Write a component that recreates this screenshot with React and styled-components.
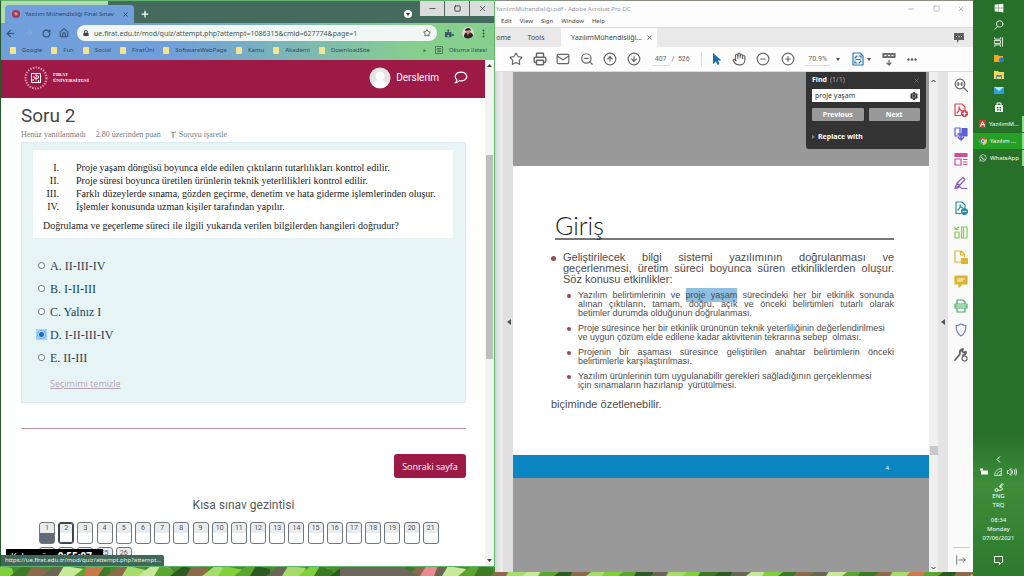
import React from "react";
import styled, { createGlobalStyle, css } from "styled-components";
import {
  ArrowLeft, ArrowRight, RotateCw, House, Star, Printer, Mail, ZoomOut,
  CircleArrowUp, CircleArrowDown, Hand, CircleMinus, CirclePlus,
  Minus, Square, X, Plus, Settings,
} from "lucide-react";
import { FaWindows, FaWhatsapp, FaPuzzlePiece, FaLock } from "react-icons/fa";

const ui = `"Noto Sans", "Open Sans", sans-serif`;
const maroon = "#9d1a47";

const Global = createGlobalStyle`
  *, *::before, *::after { box-sizing: border-box; }
  body { margin: 0; overflow: hidden; background: #267029; font-family: ${ui}; }
  button, input { font: inherit; color: inherit; }
  button { border: 0; padding: 0; background: none; display: flex; align-items: center; justify-content: center; }
  svg { display: block; flex: none; }
  h1, h2, p, ol, ul { margin: 0; padding: 0; font-weight: 400; list-style: none; }
`;

const Desktop = styled.div`
  position: relative;
  height: 100vh;
  display: grid;
  grid-template-columns: minmax(0, 495fr) minmax(0, 478fr) 51px;
  grid-template-rows: minmax(0, 1fr);
`;
const Wallpaper = styled.svg`
  position: absolute;
  left: 0;
  bottom: 0;
  width: 100%;
  height: 12px;
`;

/* ---------- browser ---------- */

const Browser = styled.section`
  position: relative;
  display: flex;
  flex-direction: column;
  margin-bottom: 9px;
  border: 1px solid #5fb56c;
  border-left-color: #24592b;
  overflow: hidden;
  background: #fff;
  z-index: 1;
`;
const TabStrip = styled.div`
  display: flex;
  height: 22px;
  padding-left: 4px;
  background: linear-gradient(#aedcae, #aedcae) 0 0 / 107px 100% no-repeat, #446b5e;
`;
const BrowserTab = styled.div`
  display: flex;
  align-items: center;
  align-self: flex-end;
  width: 129px;
  height: 18px;
  padding: 0 5px 0 7px;
  gap: 5px;
  border-radius: 4px 4px 0 0;
  background: #719fdc;
  color: #28416b;
  font-size: 6px;
`;
const TabTitle = styled.span`
  flex: 1;
  white-space: nowrap;
`;
const TabRest = styled.div`
  flex: 1;
  display: flex;
  justify-content: flex-end;
  align-items: flex-start;
  background: #446b5e;
  color: #fff;
`;
const NewTab = styled.button`
  margin: 8px auto 0 6px;
`;
const TabSearch = styled.button`
  width: 8px;
  height: 8px;
  margin: 9px 8px 0 0;
  border-radius: 50%;
  background: #fff;
`;
const WindowButtons = styled.div`
  display: flex;
  gap: 1px;
`;
const WindowButton = styled.button`
  width: 24px;
  height: 15px;
  background: ${(p) => (p.$plain ? "none" : "#d9dedd")};
  color: ${(p) => (p.$plain ? "#999" : "#333")};
`;
const AddressBar = styled.div`
  display: flex;
  align-items: center;
  height: 20px;
  padding: 0 9px 0 4px;
  gap: 8px;
  background: linear-gradient(90deg, #719fdc 0, #719fdc 35%, #87cf8c 85%);
  color: #35516b;
`;
const Omnibox = styled.div`
  flex: 1;
  display: flex;
  align-items: center;
  height: 16px;
  padding: 0 6px 0 6px;
  gap: 5px;
  border-radius: 8px;
  background: #f1f7f4;
  color: #444;
`;
const UrlInput = styled.input`
  flex: 1;
  min-width: 0;
  border: 0;
  padding: 0;
  outline: 0;
  background: none;
  color: #4a5652;
  font-size: 7px;
`;
const Bookmarks = styled.nav`
  display: flex;
  align-items: center;
  height: 17px;
  padding: 0 7px 3px 9px;
  gap: 9px;
  background: linear-gradient(90deg, #719fdc 0, #719fdc 35%, #87cf8c 85%);
  font-size: 6px;
`;
const Bookmark = styled.a`
  display: flex;
  align-items: center;
  gap: 6px;
  color: #2f4a5c;
  text-decoration: none;
  white-space: nowrap;
`;
const FolderDot = styled.span`
  width: 6px;
  height: 7px;
  border-radius: 1px;
  background: #f6e58f;
`;
const Spacer = styled.span`
  flex: 1;
`;

const Viewport = styled.div`
  flex: 1;
  min-height: 0;
  display: flex;
`;
const Page = styled.main`
  flex: 1;
  min-width: 0;
  overflow: hidden;
  background: #fff;
`;
const PageScroll = styled.div`
  width: 9px;
  display: flex;
  flex-direction: column;
  align-items: center;
  padding: 4px 0;
  background: #f0f3f0;
`;
const Thumb = styled.div`
  width: 7px;
  height: 204px;
  margin: 88px 0 auto;
  background: #bdbfbd;
`;
const SiteHeader = styled.header`
  display: flex;
  align-items: center;
  height: 38px;
  padding: 0 17px 3px 23px;
  gap: 5px;
  background: ${maroon};
  color: #fff;
`;
const SiteName = styled.div`
  margin-right: auto;
  font: bold 5px/6px "Liberation Serif", serif;
`;
const CoursesLink = styled.a`
  display: flex;
  align-items: center;
  gap: 5px;
  margin-right: 10px;
  color: #fff;
  font: 10px Roboto, sans-serif;
  text-decoration: none;
`;
const Content = styled.div`
  padding: 7px 19px 0 20px;
`;
const Title = styled.h1`
  font: 19px/22px Roboto, sans-serif;
  color: #44474b;
`;
const Meta = styled.div`
  display: flex;
  gap: 10px;
  height: 15px;
  font: 8px/16px "Liberation Serif", serif;
  color: #777c80;
`;
const FlagButton = styled.button`
  gap: 3px;
`;
const Formulation = styled.form`
  height: 261px;
  padding: 7px 12px 8px 11px;
  border: 1px solid #dbebee;
  background: #e7f4f6;
`;
const QuestionBox = styled.div`
  height: 88px;
  padding: 11px 6px 0 10px;
  background: #fff;
  color: #222;
  font: 10px/12px "Liberation Serif", serif;
  white-space: nowrap;
`;
const Clauses = styled.ol`
  margin-bottom: 7px;
`;
const Clause = styled.li`
  display: flex;
  gap: 17px;
  line-height: 13px;
`;
const Numeral = styled.span`
  width: 16px;
  text-align: right;
`;
const Options = styled.div`
  padding: 17px 0 0 3px;
`;
const Option = styled.label`
  display: flex;
  align-items: center;
  gap: 3px;
  height: 23px;
  font: 12px "Liberation Serif", serif;
  color: #1f4350;
`;
const Radio = styled.input`
  appearance: none;
  width: 11px;
  height: 11px;
  margin: 0 0 2px;
  background: radial-gradient(circle, #fff 0 2px, #7d898d 3px 3px, transparent 4px);
  &:checked { background: radial-gradient(circle, #1767d2 0 2px, #b8dcfc 3px, #78b4f0 4px, #a4d0fb 5px); }
`;
const ClearLink = styled.a`
  display: block;
  margin: 7px 0 0 14px;
  color: #b7a5b6;
  font: 9px/13px "Open Sans", sans-serif;
`;
const Rule = styled.hr`
  margin: 25px 0;
  border: 0;
  border-top: 1px solid #b595a1;
`;
const NextButton = styled.button`
  width: 72px;
  height: 24px;
  margin-left: auto;
  border-radius: 3px;
  background: ${maroon};
  color: #fff;
  font: 9px "Open Sans", sans-serif;
`;
const NavTitle = styled.h2`
  margin: 18px 0 8px;
  text-align: center;
  font: 12px/18px Roboto, sans-serif;
  color: #55595c;
`;
const NavGrid = styled.nav`
  display: grid;
  grid-template-columns: repeat(21, 16px);
  justify-content: space-between;
  row-gap: 3px;
  padding: 0 27px 0 18px;
`;
const NavBox = styled.a`
  height: 22px;
  border: 1px solid #6f777d;
  border-radius: 3px;
  background: linear-gradient(#e9ecef 10px, ${(p) => (p.$answered ? "#626b75" : "#fff")} 10px);
  color: #555;
  font: 7px/10px Roboto, sans-serif;
  text-align: center;
  text-decoration: none;
  ${(p) => p.$current && css`box-shadow: inset 0 0 0 1px #40464d; border-color: #40464d;`}
`;
const Timer = styled.div`
  position: absolute;
  left: 5px;
  bottom: 0;
  width: 97px;
  height: 17px;
  padding-left: 5px;
  background: #000;
  color: #fff;
  font: 9px/14px ${ui};
  b { font-size: 10px; }
`;
const StatusBubble = styled.div`
  position: absolute;
  left: 0;
  bottom: 0;
  width: 163px;
  height: 11px;
  padding-left: 4px;
  border-radius: 0 2px 0 0;
  background: #3f6858;
  color: #e8f2ec;
  font: 6px/10px ${ui};
  white-space: nowrap;
`;

/* ---------- document viewer ---------- */

const Viewer = styled.section`
  position: relative;
  display: flex;
  flex-direction: column;
  margin-bottom: 4px;
  border-top: 1px solid #8a8f84;
  overflow: hidden;
  background: #fdfdfd;
  color: #444;
  font-size: 6px;
`;
const ViewerTitle = styled.div`
  display: flex;
  justify-content: space-between;
  align-items: center;
  height: 15px;
  padding-left: 1px;
  color: #999;
  white-space: nowrap;
`;
const Menus = styled.div`
  display: flex;
  gap: 8px;
  height: 11px;
  padding-left: 6px;
  line-height: 11px;
`;
const DocTabs = styled.div`
  display: flex;
  align-items: center;
  height: 20px;
  padding-right: 8px;
  background: #e9e9e9;
  border-top: 1px solid #ddd;
  font-size: 7px;
`;
const HomeTab = styled.button`
  width: 16px;
  justify-content: flex-end;
`;
const ToolsTab = styled.button`
  width: 50px;
`;
const DocTab = styled.div`
  display: flex;
  align-items: center;
  justify-content: flex-end;
  width: 96px;
  height: 20px;
  margin-right: auto;
  padding-right: 4px;
  gap: 4px;
  background: #fdfdfd;
`;
const Toolbar = styled.div`
  display: flex;
  align-items: center;
  height: 25px;
  padding: 0 56px 0 14px;
  justify-content: space-between;
  border-bottom: 1px solid #ddd;
  color: #666;
  font: 7px Roboto, sans-serif;
`;
const ToolGroup = styled.div`
  display: flex;
  align-items: center;
  justify-content: space-between;
  width: ${(p) => p.$width}px;
  white-space: nowrap;
`;
const Field = styled.span`
  padding: 2px 3px;
  border-bottom: 1px solid #ddd;
`;
const Caret = styled.span`
  border: 2px solid transparent;
  border-top: 3px solid #555;
  border-bottom: 0;
`;
const Workspace = styled.div`
  flex: 1;
  min-height: 0;
  display: flex;
`;
const NavPane = styled.div`
  width: 18px;
  display: flex;
  align-items: center;
  justify-content: flex-end;
  padding-right: 2px;
  background: linear-gradient(90deg, #d5d5d5, #eee 7px, #e0e0e0 8px);
`;
const Canvas = styled.div`
  position: relative;
  flex: 1;
  min-width: 0;
  padding-top: 94px;
  background: #999;
`;
const Slide = styled.article`
  display: flex;
  flex-direction: column;
  height: 312px;
  background: #fff;
  color: #4c4c4c;
  font-family: "Liberation Sans", sans-serif;
`;
const SlideBody = styled.div`
  flex: 1;
  padding: 44px 35px 0 38px;
`;
const SlideTitle = styled.h2`
  height: 30px;
  margin-left: 4px;
  border-bottom: 2px solid #777;
  font: 300 25px/30px Lato, sans-serif;
  color: #222;
`;
const Bullet = styled.div`
  display: flex;
  align-items: flex-start;
  gap: 7px;
  padding-left: ${(p) => (p.$small ? 16 : 0)}px;
  margin-top: ${(p) => p.$top}px;
  &::before {
    content: "";
    flex: none;
    width: ${(p) => (p.$small ? 4 : 5)}px;
    height: ${(p) => (p.$small ? 4 : 5)}px;
    margin-top: ${(p) => (p.$small ? 3 : 4)}px;
    border-radius: 50%;
    background: #9b4a50;
  }
`;
const Lines = styled.div`
  flex: 1;
  font-size: ${(p) => (p.$small ? 9 : 11)}px;
  line-height: ${(p) => (p.$small ? 9 : 11)}px;
`;
const Line = styled.div`
  white-space: nowrap;
  text-align-last: ${(p) => (p.$full ? "justify" : "left")};
`;
const Hit = styled.mark`
  padding: 2px 0;
  background: #8fbfe2;
  color: inherit;
`;
const Closing = styled.p`
  margin-top: 7px;
  font-size: 11px;
  line-height: 14px;
`;
const SlideFooter = styled.footer`
  height: 23px;
  padding: 10px 40px 0;
  text-align: right;
  background: #0b86c3;
  color: #fff;
  font-size: 6px;
`;
const FindPanel = styled.form`
  position: absolute;
  top: 0;
  right: 3px;
  width: 120px;
  height: 77px;
  padding: 3px 6px;
  border-radius: 0 0 3px 3px;
  background: #333;
  color: #fff;
  font: bold 7px/10px ${ui};
`;
const FindHead = styled.div`
  display: flex;
  gap: 3px;
  height: 14px;
  span { flex: 1; font-weight: 400; color: #aaa; }
  button { height: 10px; color: #888; }
`;
const FindField = styled.label`
  display: flex;
  align-items: center;
  height: 13px;
  padding: 0 2px 0 3px;
  background: #fff;
  color: #333;
  input { flex: 1; min-width: 0; border: 0; padding: 0; outline: 0; font-weight: 400; }
`;
const FindButtons = styled.div`
  display: grid;
  grid-template-columns: 1fr 1fr;
  gap: 5px;
  margin: 6px 0 11px;
`;
const FindButton = styled.button`
  height: 13px;
  border-radius: 1px;
  background: #999;
`;
const ReplaceButton = styled.button`
  gap: 3px;
`;
const DocScroll = styled.div`
  width: 9px;
  display: flex;
  flex-direction: column;
  align-items: center;
  padding: 7px 0 2px;
  background: #efefef;
`;
const DocThumb = styled.div`
  width: 8px;
  height: 9px;
  margin: auto 0 111px;
  background: #c8c8c8;
`;
const PaneSplit = styled.div`
  width: 10px;
  display: flex;
  align-items: center;
  justify-content: center;
  background: #e4e4e4;
`;
const ToolPane = styled.aside`
  width: 25px;
  display: flex;
  flex-direction: column;
  align-items: center;
  justify-content: space-between;
  padding: 6px 0 4px;
  background: #fafafa;
`;
const ToolStack = styled.div`
  display: flex;
  flex-direction: column;
  justify-content: space-between;
  height: 284px;
`;
const ToolFoot = styled.button`
  width: 16px;
  height: 21px;
  padding-top: 4px;
  border-top: 1px solid #ccc;
`;

/* ---------- taskbar ---------- */

const Taskbar = styled.aside`
  position: relative;
  display: flex;
  flex-direction: column;
  align-items: center;
  padding: 3px 0 11px;
  background: linear-gradient(#267029 0, #267029 75%, #3d8d3a 84%, #348433 92%, #2e7a2e);
  color: #fff;
  font-size: 6px;
`;
const Pinned = styled.div`
  display: flex;
  flex-direction: column;
  justify-content: space-between;
  align-items: center;
  height: 109px;
  margin: 0 0 4px;
`;
const Task = styled.button`
  align-self: stretch;
  justify-content: flex-start;
  height: 16px;
  margin-bottom: 1px;
  padding-left: 6px;
  gap: 3px;
  border-right: 2px solid #8fe08f;
  background: ${(p) => (p.$active ? "#24a024" : "none")};
  white-space: nowrap;
`;
const Tray = styled.div`
  display: flex;
  flex-direction: column;
  align-items: center;
  margin-top: auto;
  line-height: 9px;
  text-align: center;
`;
const TrayIcons = styled.div`
  display: flex;
  gap: 5px;
  margin: 5px 0 7px;
`;
const Clock = styled.div`
  margin: 6px 0 13px;
`;

const Glyph = ({ size = 14, color = "#666", children, label }) => (
  <svg width={size} height={size} viewBox="0 0 14 14" fill="none" stroke={color} strokeWidth="1.2" strokeLinejoin="round" strokeLinecap="round" aria-label={label}>
    {children}
  </svg>
);

const clauses = [
  ["I.", "Proje yaşam döngüsü boyunca elde edilen çıktıların tutarlılıkları kontrol edilir."],
  ["II.", "Proje süresi boyunca üretilen ürünlerin teknik yeterlilikleri kontrol edilir."],
  ["III.", "Farklı düzeylerde sınama, gözden geçirme, denetim ve hata giderme işlemlerinden oluşur."],
  ["IV.", "İşlemler konusunda uzman kişiler tarafından yapılır."],
];
const options = ["A. II-III-IV", "B. I-II-III", "C. Yalnız I", "D. I-II-III-IV", "E. II-III"];
const bookmarks = ["Google", "Fun", "Social", "FiratÜni", "SoftwareWebPage", "Kamu", "Akademi", "DownloadSite"];

function BrowserWindow() {
  return (
    <Browser>
      <TabStrip>
        <BrowserTab>
          <svg width="8" height="8" viewBox="0 0 8 8"><circle cx="4" cy="4" r="4" fill="#a33650" /><path d="M2 3l2-1 2 2-2 2z" fill="#c99" /></svg>
          <TabTitle>Yazılım Mühendisliği Final Sınav</TabTitle>
          <X size={7} strokeWidth={3} />
        </BrowserTab>
        <TabRest>
          <NewTab aria-label="New tab"><Plus size={10} strokeWidth={3} /></NewTab>
          <TabSearch aria-label="Search tabs"><svg width="4" height="3" viewBox="0 0 4 3"><path d="M0 0h4L2 3z" fill="#333" /></svg></TabSearch>
          <WindowButtons>
            <WindowButton aria-label="Minimize"><Minus size={9} /></WindowButton>
            <WindowButton aria-label="Maximize"><Square size={7} strokeWidth={3} /></WindowButton>
            <WindowButton aria-label="Close"><X size={9} /></WindowButton>
          </WindowButtons>
        </TabRest>
      </TabStrip>
      <AddressBar>
        <ArrowLeft size={11} strokeWidth={2.5} />
        <ArrowRight size={10} color="#8badd9" />
        <RotateCw size={9} strokeWidth={3} />
        <House size={10} strokeWidth={2.5} />
        <Omnibox>
          <FaLock size={6} />
          <UrlInput aria-label="Address" defaultValue="ue.firat.edu.tr/mod/quiz/attempt.php?attempt=1086315&cmid=627774&page=1" />
          <Star size={8} strokeWidth={2.5} />
        </Omnibox>
        <FaPuzzlePiece size={9} />
        <svg width="12" height="12" viewBox="0 0 12 12"><circle cx="6" cy="6" r="6" fill="#d9d9d4" /><path d="M2 10c0-4 2-5 4-5s5 1 5 4a6 6 0 0 1-9 1z" fill="#252525" /><path d="M4 5c0-4 4-4 4 0l-1 2H5z" fill="#c98d78" /><path d="M3 4c0-4 6-4 6 0L7 3z" fill="#2b1d1d" /><path d="M5 7h2l-1 3z" fill="#b33" /></svg>
        <svg width="3" height="9" viewBox="0 0 3 9" fill="#35553d"><circle cx="1.5" cy="1.5" r="1" /><circle cx="1.5" cy="4.5" r="1" /><circle cx="1.5" cy="7.5" r="1" /></svg>
      </AddressBar>
      <Bookmarks>
        {bookmarks.map((b) => <Bookmark key={b} href="#"><FolderDot />{b}</Bookmark>)}
        <Spacer />
        <span>»</span>
        <Bookmark href="#">
          <svg width="8" height="8" viewBox="0 0 8 8" fill="none" stroke="#4b7a55"><path d="M.5.5h7v7h-7zM2 2.5h4M2 4h4M2 5.5h4" /></svg>
          Okuma listesi
        </Bookmark>
      </Bookmarks>
      <Viewport>
        <Page>
          <SiteHeader>
            <svg width="24" height="24" viewBox="0 0 24 24" fill="none" stroke="#f0c4d2">
              <circle cx="12" cy="12" r="10.5" strokeWidth="2" strokeDasharray="1.4 1.3" opacity=".8" />
              <path d="M7.5 7.5h9v9h-9zM10 10v2h2v2.500M12 7.500V10h2.500v2H12M14.500 16.500V14M7.500 14H10" stroke="#fff" />
            </svg>
            <SiteName>FIRAT<br />ÜNİVERSİTESİ</SiteName>
            <CoursesLink href="#">
              <svg width="22" height="22" viewBox="0 0 22 22"><circle cx="11" cy="11" r="10.500" fill="#e4e4e4" /><circle cx="11" cy="9" r="4.500" fill="#fff" /><path d="M3 17c2-3 5-4 8-4s6 1 8 4a10 10 0 0 1-16 0z" fill="#fff" /></svg>
              Derslerim
            </CoursesLink>
            <svg width="14" height="13" viewBox="0 0 14 13" fill="none" stroke="#fff" strokeWidth="1.2"><path d="M3 9C-.5 6 1.500 1.200 7 1.200S14.500 6 11 8.700C9 10 6.500 9.800 5.500 9.600 4.500 10.800 3 11.500 1.500 11.600 2.400 10.800 3 10 3 9z" /></svg>
          </SiteHeader>
          <Content>
            <Title>Soru 2</Title>
            <Meta>
              <span>Henüz yanıtlanmadı</span>
              <span>2.80 üzerinden puan</span>
              <FlagButton>
                <svg width="5" height="7" viewBox="0 0 5 7" fill="none" stroke="#777"><path d="M2 7V1.500M0 1.500c1-1.500 2 .500 2 .500s1-1 3-1" /></svg>
                Soruyu işaretle
              </FlagButton>
            </Meta>
            <Formulation>
              <QuestionBox>
                <Clauses>
                  {clauses.map(([n, t]) => <Clause key={n}><Numeral>{n}</Numeral>{t}</Clause>)}
                </Clauses>
                <p>Doğrulama ve geçerleme süreci ile ilgili yukarıda verilen bilgilerden hangileri doğrudur?</p>
              </QuestionBox>
              <Options>
                {options.map((o) => (
                  <Option key={o}><Radio type="radio" name="answer" defaultChecked={o[0] === "D"} />{o}</Option>
                ))}
                <ClearLink href="#">Seçimimi temizle</ClearLink>
              </Options>
            </Formulation>
            <Rule />
            <NextButton>Sonraki sayfa</NextButton>
            <NavTitle>Kısa sınav gezintisi</NavTitle>
            <NavGrid>
              {Array.from({ length: 26 }, (_, i) => (
                <NavBox key={i} href="#" $answered={i === 0} $current={i === 1}>{i + 1}</NavBox>
              ))}
            </NavGrid>
          </Content>
        </Page>
        <PageScroll>
          <svg width="5" height="3" viewBox="0 0 5 3"><path d="M0 3h5L2.500 0z" fill="#444" /></svg>
          <Thumb />
          <svg width="5" height="3" viewBox="0 0 5 3"><path d="M0 0h5L2.500 3z" fill="#444" /></svg>
        </PageScroll>
      </Viewport>
      <Timer>Kalan süre <b>0:55:07</b></Timer>
      <StatusBubble>https://ue.firat.edu.tr/mod/quiz/attempt.php?attempt...</StatusBubble>
    </Browser>
  );
}

function ToolIcons() {
  return (
    <ToolStack>
      <Glyph label="Search tools"><circle cx="6" cy="6" r="4.800" /><path d="M9.500 9.500l4 4M3 6h2M7 6h2M4 4.500L5 6 4 7.500M8 4.500L7 6l1 1.500" /></Glyph>
      <Glyph label="Create PDF" color="#d9444f"><path d="M7 12.500H1V1h7l3 3v3M3 10c3-3 2-6 2-6s1 4 4 4" /><circle cx="10.500" cy="10.500" r="3" fill="#d9444f" /><path d="M9 10.500h3M10.500 9v3" stroke="#fff" /></Glyph>
      <Glyph label="Export PDF" color="#5b5fd0"><path d="M1 1h5v8H1z" /><path d="M8 1.500h5V9H8z" fill="#5b5fd0" /><path d="M4 7h5M7 7v6M4.500 10.500L7 13l2.500-2.500" strokeWidth="1.600" /></Glyph>
      <Glyph label="Edit PDF" color="#d24c94"><path d="M1 1.500h12v3H1z" fill="#d24c94" /><path d="M1 7h6v6H1zM9.500 7.500H13M9.500 10H13M9.500 12.500H13" /></Glyph>
      <Glyph label="Sign" color="#8f5ac8"><path d="M1 12.500L3 7l6-5.500 2 2L5.500 9.500 1 12.500c4 0 4-2 5-1.500s1 1.500 2.500 1.500H13M3 7l2.500 2.500" /></Glyph>
      <Glyph label="Redact" color="#28919a"><path d="M7 12.500H2V1h6l3 3v3M4 9c3-3 2-5 2-5s1 3 3 3" /><circle cx="10.500" cy="10.500" r="3" fill="#28919a" /><path d="M9 10.500h3" stroke="#fff" /></Glyph>
      <Glyph label="Organize" color="#86c856"><path d="M7.500 2H13v11H7.500zM9.500 2v11M1 7h4v6H1zM1 4.500L5 2M1 2v2.500h3" /></Glyph>
      <Glyph label="Protect file" color="#dbb52c"><path d="M7 12H1V1h6l3.500 3.500V7M6.500 1v4h4" /><path d="M7.500 8.500h6v5h-6z" fill="#dbb52c" /></Glyph>
      <Glyph label="Comment" color="#dbb52c"><path d="M1 2h12v8H8l-3 3v-3H1z" fill="#dbb52c" /><path d="M3.500 5h7M3.500 7h5" stroke="#fff" /></Glyph>
      <Glyph label="Scan" color="#43b062"><path d="M3 5V1h6l2 2v2M3 9v4h8V9M1 7h12M1 5h12v4H1z" /></Glyph>
      <Glyph label="Protect" color="#6f79cf"><path d="M7 1c2 1.500 4 1.500 5 1.500 0 5-1 8-5 10.500C3 10.500 2 7.500 2 2.500 3 2.500 5 2.500 7 1z" /></Glyph>
      <Glyph label="More tools"><path d="M1 12l5-6c-1-3 1-5 3-5L8 3l1.500 1.500L12 4c0 2-1 3-3 3.500" strokeWidth="1.900" /><circle cx="10.500" cy="10.500" r="2.500" /></Glyph>
    </ToolStack>
  );
}

function DocumentWindow() {
  return (
    <Viewer>
      <ViewerTitle>
        YazılımMühendisliği.pdf - Adobe Acrobat Pro DC
        <WindowButtons>
          <WindowButton $plain aria-label="Minimize"><Minus size={8} /></WindowButton>
          <WindowButton $plain aria-label="Maximize"><Square size={7} /></WindowButton>
          <WindowButton $plain aria-label="Close"><X size={8} /></WindowButton>
        </WindowButtons>
      </ViewerTitle>
      <Menus>{["Edit", "View", "Sign", "Window", "Help"].map((m) => <button key={m}>{m}</button>)}</Menus>
      <DocTabs>
        <HomeTab aria-label="Home">ome</HomeTab>
        <ToolsTab>Tools</ToolsTab>
        <DocTab>YazılımMühendisliği... <X size={7} strokeWidth={3} /></DocTab>
        <svg width="12" height="12" viewBox="0 0 12 12"><path d="M1 1h10v7H6l-2 3V8H1z" fill="#606060" /><path d="M3 4.500h1M5.500 4.500h1M8 4.500h1" stroke="#fff" /></svg>
      </DocTabs>
      <Toolbar>
        <ToolGroup $width={132}>
          <Star size={14} /><Printer size={14} strokeWidth={2.5} /><Mail size={14} /><ZoomOut size={14} /><CircleArrowUp size={14} /><CircleArrowDown size={14} />
        </ToolGroup>
        <ToolGroup $width={38}><Field>407</Field><span>/&nbsp; 526</span></ToolGroup>
        <ToolGroup $width={94}>
          <svg width="1" height="14"><path d="M.5 0v14" stroke="#ddd" /></svg>
          <svg width="10" height="14" viewBox="0 0 10 14"><path d="M1 1v11l3-2.500L5.500 13l2-1L6 8.500h3.500z" fill="#1b6fb5" /></svg>
          <Hand size={14} /><CircleMinus size={14} /><CirclePlus size={14} />
        </ToolGroup>
        <ToolGroup $width={35}><Field>70.9%</Field><Caret /></ToolGroup>
        <ToolGroup $width={66}>
          <ToolGroup $width={20}>
            <Glyph color="#2678b8"><path d="M2 1h7l3 3v9H2zM4 6l2-2M10 6V4H8M4 9v2h2M10 9l-2 2M5 7.500h4" /></Glyph>
            <Caret />
          </ToolGroup>
          <Glyph><path d="M1 1.500h12v4H1z" fill="#777" /><path d="M7 8v5M5 11l2 2 2-2" /><path d="M3 3.500h1M6.500 3.500h1M10 3.500h1" stroke="#fff" /></Glyph>
          <svg width="10" height="3" viewBox="0 0 10 3" fill="#555"><circle cx="1.500" cy="1.500" r="1.200" /><circle cx="5" cy="1.500" r="1.200" /><circle cx="8.500" cy="1.500" r="1.200" /></svg>
        </ToolGroup>
      </Toolbar>
      <Workspace>
        <NavPane><svg width="4" height="6" viewBox="0 0 4 6"><path d="M4 0v6L0 3z" fill="#555" /></svg></NavPane>
        <Canvas>
          <Slide>
            <SlideBody>
              <SlideTitle>Giriş</SlideTitle>
              <Bullet $top={12}>
                <Lines>
                  <Line $full>Geliştirilecek bilgi sistemi yazılımının doğrulanması ve</Line>
                  <Line $full>geçerlenmesi, üretim süreci boyunca süren etkinliklerden oluşur.</Line>
                  <Line>Söz konusu etkinlikler:</Line>
                </Lines>
              </Bullet>
              <Bullet $small $top={6}>
                <Lines $small>
                  <Line $full>Yazılım belirtimlerinin ve <Hit>proje yaşam</Hit> sürecindeki her bir etkinlik sonunda</Line>
                  <Line $full>alınan çıktıların, tamam, doğru, açık ve önceki belirtimleri tutarlı olarak</Line>
                  <Line>betimler durumda olduğunun doğrulanması.</Line>
                </Lines>
              </Bullet>
              <Bullet $small $top={6}>
                <Lines $small>
                  <Line>Proje süresince her bir etkinlik ürününün teknik yeterliliğinin değerlendirilmesi</Line>
                  <Line>ve uygun çözüm elde edilene kadar aktivitenin tekrarına sebep&nbsp; olması.</Line>
                </Lines>
              </Bullet>
              <Bullet $small $top={6}>
                <Lines $small>
                  <Line $full>Projenin bir aşaması süresince geliştirilen anahtar belirtimlerin önceki</Line>
                  <Line>belirtimlerle karşılaştırılması.</Line>
                </Lines>
              </Bullet>
              <Bullet $small $top={6}>
                <Lines $small>
                  <Line>Yazılım ürünlerinin tüm uygulanabilir gerekleri sağladığının gerçeklenmesi</Line>
                  <Line>için sınamaların hazırlanıp&nbsp; yürütülmesi.</Line>
                </Lines>
              </Bullet>
              <Closing>biçiminde özetlenebilir.</Closing>
            </SlideBody>
            <SlideFooter>4</SlideFooter>
          </Slide>
          <FindPanel>
            <FindHead>Find <span>(1/1)</span><button type="button" aria-label="Close"><X size={7} /></button></FindHead>
            <FindField><input aria-label="Find" defaultValue="proje yaşam" /><Settings size={8} strokeWidth={4} /></FindField>
            <FindButtons><FindButton type="button">Previous</FindButton><FindButton type="button">Next</FindButton></FindButtons>
            <ReplaceButton type="button"><svg width="3" height="4" viewBox="0 0 3 4"><path d="M0 0l3 2-3 2z" fill="#888" /></svg>Replace with</ReplaceButton>
          </FindPanel>
        </Canvas>
        <DocScroll>
          <svg width="5" height="4" viewBox="0 0 5 4" fill="none" stroke="#333"><path d="M.5 3l2-2 2 2" /></svg>
          <DocThumb />
          <svg width="5" height="4" viewBox="0 0 5 4" fill="none" stroke="#333"><path d="M.5 1l2 2 2-2" /></svg>
        </DocScroll>
        <PaneSplit><svg width="4" height="6" viewBox="0 0 4 6"><path d="M4 0v6L0 3z" fill="#555" /></svg></PaneSplit>
        <ToolPane>
          <ToolIcons />
          <ToolFoot aria-label="Collapse pane"><Glyph size={10}><path d="M1 1v12M4 7h9M10 4l3 3-3 3" /></Glyph></ToolFoot>
        </ToolPane>
      </Workspace>
    </Viewer>
  );
}

function SideTaskbar() {
  return (
    <Taskbar>
      <Pinned>
        <FaWindows size={10} />
        <Glyph size={10} color="#fff"><circle cx="8" cy="5.500" r="4.500" /><path d="M5 9l-4 4" /></Glyph>
        <Glyph size={10} color="#fff"><path d="M1 1v2h8V1M1 13v-2h8v2M1 5h8v4H1zM12 1v12" /></Glyph>
        <svg width="10" height="9" viewBox="0 0 10 9"><path d="M0 1h4l1 1h4v6H0z" fill="#f5a623" /><circle cx="7.500" cy="6" r="2.500" fill="#2979c9" /></svg>
        <svg width="10" height="9" viewBox="0 0 10 9"><path d="M0 1h4l1 1h5v7H0z" fill="#f7d760" /><path d="M2 5h6v4H7V7H3v2H2z" fill="#5595a8" /></svg>
        <svg width="10" height="9" viewBox="0 0 10 9"><path d="M0 1h10v7H0z" fill="#2f9ee5" /><path d="M0 1l5 4 5-4z" fill="#b7e1fb" /></svg>
        <svg width="10" height="10" viewBox="0 0 10 10"><path d="M3 3V1h4v2" fill="none" stroke="#fff" /><path d="M1 3h8v7H1z" fill="#fff" /><path d="M3 5h1.500v1.500H3zM5.500 5H7v1.500H5.500zM3 7.300h1.500v1.500H3zM5.500 7.300H7v1.500H5.500z" fill="#267029" /></svg>
      </Pinned>
      <Task><svg width="7" height="8" viewBox="0 0 7 8"><path d="M0 0h7v8H0z" fill="#d5362b" /><path d="M1.500 6.500l2-5 2 5M1.500 5C3 4 5 4.500 6 5" stroke="#fff" fill="none" /></svg>YazılımM...</Task>
      <Task $active><svg width="8" height="8" viewBox="0 0 8 8"><path d="M4 4L.5 2a4 4 0 0 1 7 0z" fill="#e04a3a" /><path d="M4 4l3.500-2A4 4 0 0 1 4 8z" fill="#f6c844" /><path d="M4 4v4A4 4 0 0 1 .5 2z" fill="#45a85a" /><circle cx="4" cy="4" r="1.700" fill="#4a8af4" stroke="#fff" strokeWidth=".6" /></svg>Yazılım ...</Task>
      <Task><FaWhatsapp size={8} />WhatsApp</Task>
      <Tray>
        <svg width="5" height="7" viewBox="0 0 5 7" fill="none" stroke="#fff"><path d="M4 .5l-3 3 3 3" /></svg>
        <TrayIcons>
          <svg width="9" height="7" viewBox="0 0 9 7"><path d="M1 2.500h7v4H1z" fill="#fff" /><path d="M0 .5h3v2H0z" fill="#fff" /></svg>
          <svg width="8" height="8" viewBox="0 0 8 8" fill="none" stroke="#d5ead5" strokeWidth=".8"><path d="M.5 7.500A7 7 0 0 1 7.500.5v7zM3 7.500A4.500 4.500 0 0 1 7.500 3M5.500 7.500a2 2 0 0 1 2-2" /></svg>
          <svg width="10" height="8" viewBox="0 0 10 8" fill="none" stroke="#fff" strokeWidth=".8"><path d="M.5 2.500H2l2-2v7l-2-2H.5zM5.500 2.500v3M7.200 1.500q1.200 2.500 0 5M8.800.5q1.500 3.500 0 7" /></svg>
        </TrayIcons>
        <svg width="10" height="9" viewBox="0 0 10 9" fill="none" stroke="#fff"><path d="M1 7c0-2 3-2 3 0s-3 2-3 0zM4 7c3 1 6-1 4-2S5 5 6 3l2-2.500L9 1.500 6.500 4" /></svg>
        <div>ENG<br />TRQ</div>
        <Clock>08:34<br />Monday<br />07/06/2021</Clock>
        <svg width="9" height="9" viewBox="0 0 9 9" fill="none" stroke="#fff"><path d="M.5.5h8v6H7l-1.500 2v-2h-5z" /></svg>
      </Tray>
    </Taskbar>
  );
}

export default function App() {
  return (
    <Desktop>
      <Global />
      <Wallpaper viewBox="0 0 1024 12" preserveAspectRatio="none">
        <rect width="1024" height="12" fill="#4b8d2c" />
        {Array.from({ length: 64 }, (_, i) => {
          const fills = ["#7fd03b", "#2d5a22", "#a8dc6a", "#5aa52e", "#8a6a4a", "#c9e89a", "#3d7a26", "#6b6557"];
          const x = i * 16;
          return <path key={i} d={`M${x - 6} 12L${x + ((i * 7) % 14)} 2l${12 + (i % 5) * 2} ${2 + (i % 3)}L${x + 14} 12z`} fill={fills[(i * 5 + (i % 3)) % 8]} />;
        })}
        <path d="M340 2l60 0 20 10h-80z" fill="#6d675c" />
        <path d="M420 12l6-10h12l-4 10z" fill="#e88a90" />
        <path d="M86 3h18l-6 9H84zM906 12l10-9h14l-8 9z" fill="#c9794a" />
      </Wallpaper>
      <BrowserWindow />
      <DocumentWindow />
      <SideTaskbar />
    </Desktop>
  );
}
